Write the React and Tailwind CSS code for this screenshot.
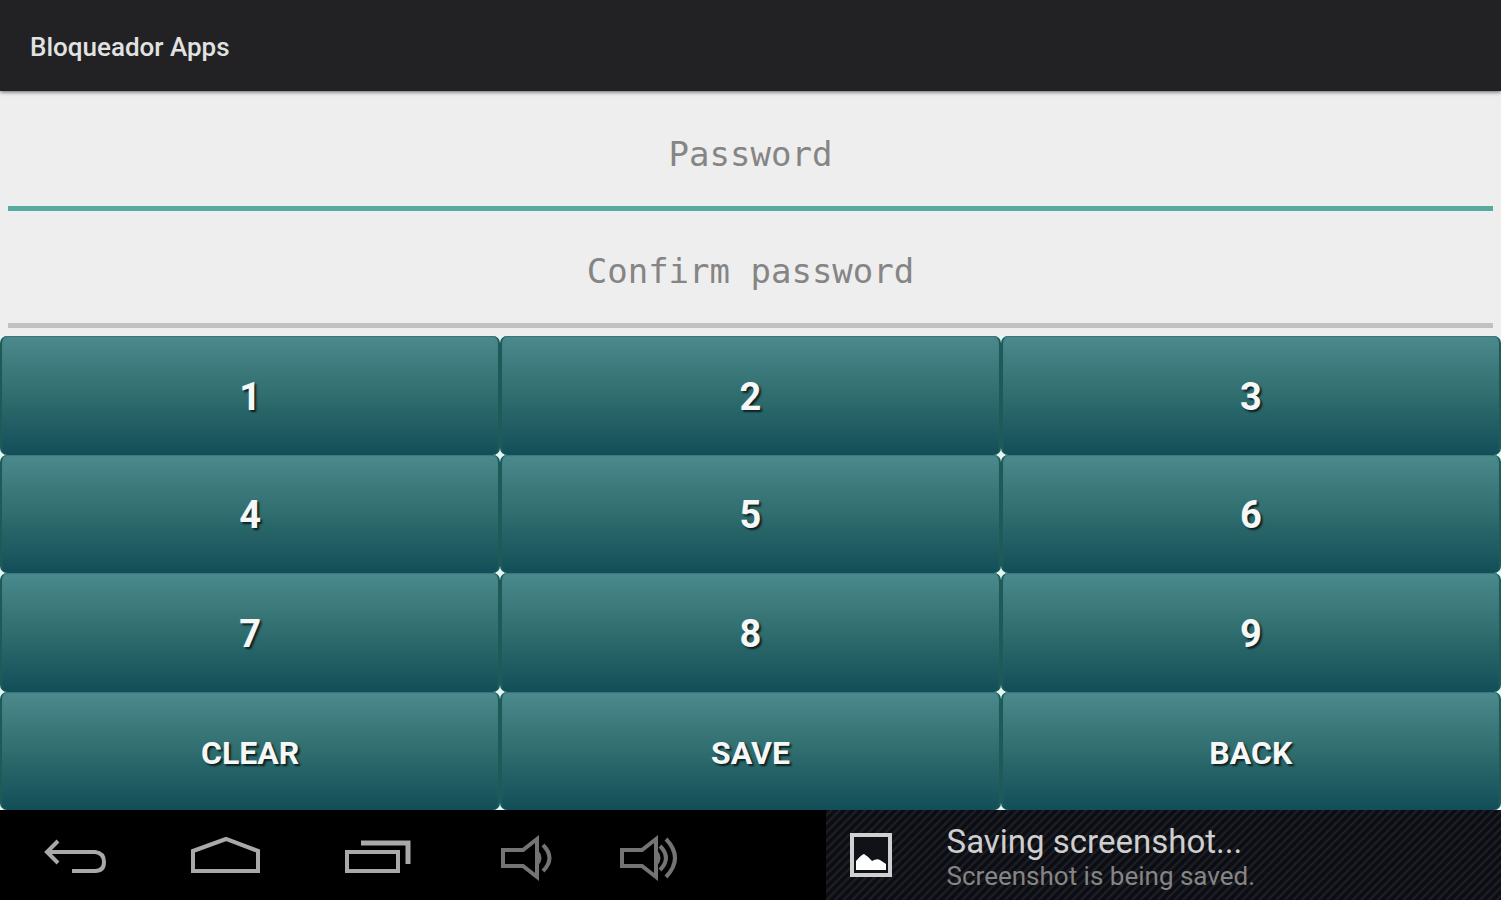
import { useState } from "react";

const keys = ["1", "2", "3", "4", "5", "6", "7", "8", "9", "CLEAR", "SAVE", "BACK"];

const isDigit = (key) => /^\d$/.test(key);

function PasswordField({ label, value, active, onChange, onFocus }) {
  return (
    <div className={`border-b-[5px] ${active ? "border-[#56ab9e]" : "border-[#c2c0c0]"}`}>
      <input
        type="password"
        aria-label={label}
        placeholder={label}
        value={value}
        onChange={(e) => onChange(e.target.value)}
        onFocus={onFocus}
        className="block w-full h-28 pt-2 bg-transparent text-center text-[34px] font-['DejaVu_Sans_Mono',monospace] text-[#333333] placeholder:text-[#858585] outline-none"
      />
    </div>
  );
}

function Speaker({ loud }) {
  return (
    <svg width="60" height="48" viewBox="0 0 60 48" fill="none" stroke="#747474" strokeWidth="4">
      <path d="M3 16H23L37 5V43L23 32H3Z" />
      <path d="M38 16Q45 24 38 32Z" fill="#747474" stroke="none" />
      {loud ? (
        <path d="M41 12Q53 24 41 36M47 5Q65 24 47 43" />
      ) : (
        <path d="M43 11Q56 24 43 37" />
      )}
    </svg>
  );
}

function NavButton({ label, children, className }) {
  return (
    <button type="button" aria-label={label} className={`flex items-center ${className}`}>
      {children}
    </button>
  );
}

export default function App() {
  const [values, setValues] = useState({ password: "", confirm: "" });
  const [active, setActive] = useState("password");

  const setField = (name, value) => setValues((prev) => ({ ...prev, [name]: value }));

  const handleKey = (key) => {
    if (isDigit(key)) setField(active, values[active] + key);
    if (key === "CLEAR") setValues({ password: "", confirm: "" });
    if (key === "BACK") setField(active, values[active].slice(0, -1));
  };

  return (
    <div className="min-h-screen flex flex-col bg-[#eeeeee] font-[Roboto,sans-serif]">
      <header className="relative shrink-0 h-[91px] px-[30px] pt-[2px] flex items-center bg-[#222224] shadow-[0_1px_4px_rgba(0,0,0,0.6)]">
        <h1 className="text-[26px] leading-8 font-medium text-[#e2e2e2]">Bloqueador Apps</h1>
      </header>

      <form className="flex-1 flex flex-col" onSubmit={(e) => e.preventDefault()}>
        <div className="px-2 pt-[3px] pb-2">
          <PasswordField
            label="Password"
            value={values.password}
            active={active === "password"}
            onChange={(v) => setField("password", v)}
            onFocus={() => setActive("password")}
          />
          <PasswordField
            label="Confirm password"
            value={values.confirm}
            active={active === "confirm"}
            onChange={(v) => setField("confirm", v)}
            onFocus={() => setActive("confirm")}
          />
        </div>

        <div className="flex-1 grid grid-cols-3 auto-rows-fr bg-[#e2f6f4]">
          {keys.map((key) => (
            <button
              key={key}
              type={key === "SAVE" ? "submit" : "button"}
              onClick={() => handleKey(key)}
              className={`min-h-16 pt-1 rounded-[7px] border-x-2 border-[#1d5a58] bg-linear-to-b from-[#4b8a8d] via-[#2f6d6e] to-[#124e58] bg-origin-border shadow-[inset_0_1px_1px_#3a7678] font-bold text-[#f6f8f8] [text-shadow:2px_2px_2px_rgba(0,0,0,0.7)] ${isDigit(key) ? "text-[38px]" : "text-[32px]"}`}
            >
              {key}
            </button>
          ))}
        </div>
      </form>

      <footer className="shrink-0 h-[90px] flex bg-black">
        <nav className="w-[55%] flex items-center pl-11 pt-[6px]">
          <NavButton label="Back" className="w-[146px]">
            <svg width="64" height="48" viewBox="0 0 64 48" fill="none" stroke="#a9a9a9" strokeWidth="4">
              <path d="M14 7L3 18L14 29M3 18H51Q60 19 60 28Q60 37 51 37H28" />
            </svg>
          </NavButton>
          <NavButton label="Home" className="w-[154px]">
            <svg width="72" height="48" viewBox="0 0 72 48" fill="none" stroke="#a9a9a9" strokeWidth="4">
              <path d="M3 17L36 5L68 17V37H3Z" />
            </svg>
          </NavButton>
          <NavButton label="Recent apps" className="w-[156px]">
            <svg width="70" height="48" viewBox="0 0 70 48" fill="none" stroke="#a9a9a9" strokeWidth="4">
              <path d="M3 18H54V37H3Z" />
              <path d="M17 9H64V30" strokeWidth="5" />
            </svg>
          </NavButton>
          <NavButton label="Volume down" className="w-[119px]">
            <Speaker />
          </NavButton>
          <NavButton label="Volume up">
            <Speaker loud />
          </NavButton>
        </nav>

        <div
          role="status"
          className="flex-1 flex items-center pl-[23px] bg-[repeating-linear-gradient(135deg,#0c0d12_0px,#0c0d12_2px,#20222a_4px,#0c0d12_6px)]"
        >
          <svg width="44" height="46" viewBox="0 0 44 46" className="shrink-0">
            <rect x="3" y="3" width="38" height="40" fill="#111217" stroke="#d0d0d0" strokeWidth="4" />
            <path d="M7 38V29Q12 23 15 22Q20 25 23 29Q28 26 31 28L37 32V38Z" fill="#ffffff" />
          </svg>
          <div className="pl-[54px] pt-[6px]">
            <p className="text-[33px] leading-9 text-[#cfcfcf]">Saving screenshot...</p>
            <p className="text-[26px] leading-8 text-[#858585]">Screenshot is being saved.</p>
          </div>
        </div>
      </footer>
    </div>
  );
}
